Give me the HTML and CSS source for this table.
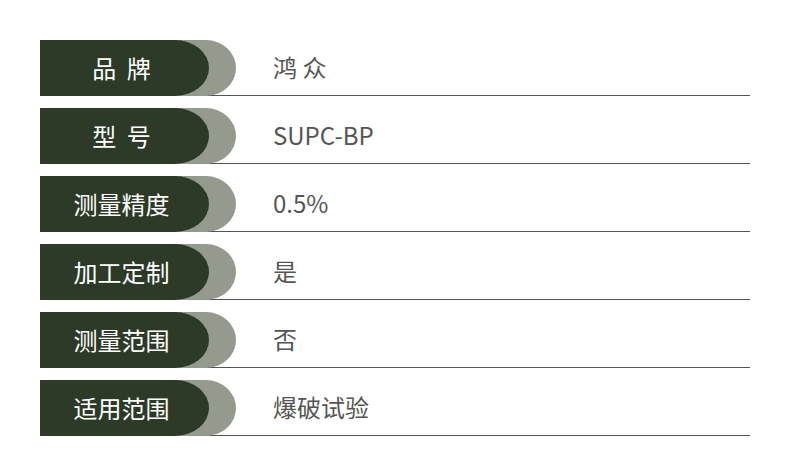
FILE: index.html
```html
<!DOCTYPE html>
<html lang="zh">
<head>
<meta charset="utf-8">
<link rel="stylesheet" href="styles.css">
</head>
<body>
<div class="table">
  <div class="row"><div class="tab"><div class="label">品 牌</div></div><div class="value">鸿 众</div></div>
  <div class="row"><div class="tab"><div class="label">型 号</div></div><div class="value">SUPC-BP</div></div>
  <div class="row"><div class="tab"><div class="label">测量精度</div></div><div class="value">0.5%</div></div>
  <div class="row"><div class="tab"><div class="label">加工定制</div></div><div class="value">是</div></div>
  <div class="row"><div class="tab"><div class="label">测量范围</div></div><div class="value">否</div></div>
  <div class="row"><div class="tab"><div class="label">适用范围</div></div><div class="value">爆破试验</div></div>
</div>
</body>
</html>
```
FILE: styles.css
```css
html, body {
  margin: 0;
  padding: 0;
  background: #ffffff;
}
body {
  font-family: "Noto Sans CJK SC", "Noto Sans", sans-serif;
}
.table {
  display: flex;
  flex-direction: column;
  gap: 12px;
  padding: 40px 40px 0 40px;
  width: 710px;
}
.row {
  display: flex;
  align-items: center;
  height: 56px;
  padding-bottom: 2px;
  border-bottom: 1px solid #555555;
  box-sizing: border-box;
}
.tab {
  width: 196px;
  height: 56px;
  margin-bottom: -3px;
  align-self: flex-start;
  background: #949b8e;
  border-radius: 0 30px 30px 0 / 0 28px 28px 0;
  flex: none;
}
.label {
  width: 169px;
  height: 56px;
  box-sizing: border-box;
  background: #2c3a27;
  border-radius: 0 34px 34px 0 / 0 28px 28px 0;
  color: #ffffff;
  font-size: 24px;
  display: flex;
  align-items: center;
  justify-content: center;
  padding: 0 6px 2px 0;
  word-spacing: 5px;
  white-space: pre;
}
.value {
  margin-left: 37px;
  color: #555555;
  font-size: 24px;
}
```
